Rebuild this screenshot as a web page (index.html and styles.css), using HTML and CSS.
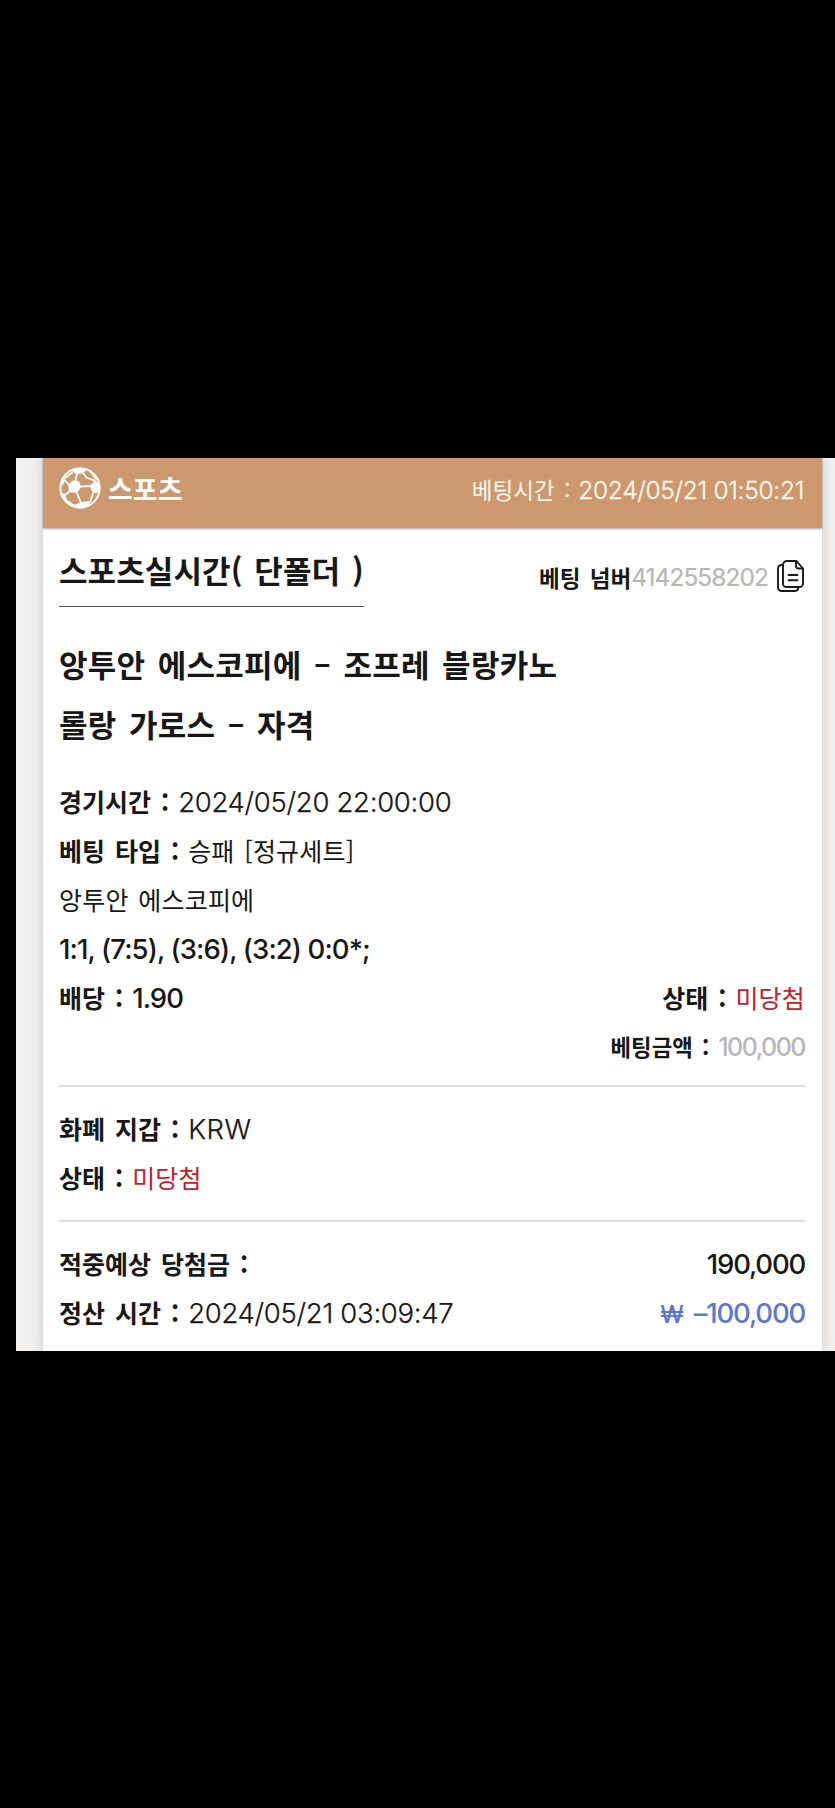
FILE: index.html
```html
<!DOCTYPE html>
<html lang="ko">
<head>
<meta charset="utf-8">
<title>베팅 내역</title>
<link rel="stylesheet" href="styles.css">
</head>
<body>
<main class="panel">
<article class="card">
<header class="card-head">
<div class="brand">
<svg class="ball" viewBox="0 0 42 42" aria-hidden="true">
<circle cx="21" cy="21" r="19.7" fill="none" stroke="#fff" stroke-width="1.900"/>
<path d="M9.500 17.500L14.500 13.700 19.700 14.700 22 19.700 17.700 25.500 10.300 24.700zM31 19L36 13.700 40.500 17.500 40 25 34.300 25.700zM13.500 3.500L20 1.500 27.500 2.500 24 6 16.500 6.500zM1.500 20L2.500 13 6 11 4.500 16.500zM15 38.500L22 35.500 31 34.500 29 39 21 41zM2.500 26L5.500 28 9 35.500 4.500 32zM30 3.500L36 7.500 40 14 36.500 12 33 7.500z" fill="#fff" stroke="#fff" stroke-width="0.800" stroke-linejoin="round"/>
<path d="M16.300 14L18.300 6M22 19.700L31 19M17.700 25.500L22 36M10.300 24.700L5 28.500M9.500 17.500L5 12.500M24 6L27.500 10.500 36 13.700M34.300 25.700L31 35M7.500 33.500L15 38.500M6 11L14 5" fill="none" stroke="#fff" stroke-width="1.800"/>
</svg>
<span class="brand-name">스포츠</span>
</div>
<div class="placed"><span class="ko">베팅시간 :</span><span class="date">2024/05/21 01:50:21</span></div>
</header>
<section class="bet-head">
<h1 class="kind">스포츠실시간( 단폴더 )</h1>
<div class="bet-no"><span class="ko">베팅 넘버</span><span class="id">4142558202</span>
<svg class="copy" viewBox="0 0 27 32" aria-hidden="true"><g fill="none" stroke="#1b1b1b" stroke-width="1.900" stroke-linejoin="round" stroke-linecap="round"><path d="M10 1h9.500l6.500 7.500v15a3.500 3.500 0 0 1-3.500 3.500H9.500A3.500 3.500 0 0 1 6 23.500V5a4 4 0 0 1 4-4z"/><path d="M19 1.500V6a2.500 2.500 0 0 0 2.500 2.500H26M6 5H4.500A3.500 3.500 0 0 0 1 8.500V27.500A3.500 3.500 0 0 0 4.500 31h13.500A3.500 3.500 0 0 0 21.300 27.500M11.500 15h9M11.500 20.300h9"/></g></svg></div>
</section>
<section class="match"><div>앙투안 에스코피에 – 조프레 블랑카노</div><div>롤랑 가로스 – 자격</div></section>
<section class="rows">
<div class="row"><div><span class="label">경기시간 :</span><span class="num">2024/05/20 22:00:00</span></div></div>
<div class="row"><div><span class="label">베팅 타입 :</span><span class="text">승패 [정규세트]</span></div></div>
<div class="row"><div><span class="text">앙투안 에스코피에</span></div></div>
<div class="row"><div><span class="strong">1:1, (7:5), (3:6), (3:2) 0:0*;</span></div></div>
<div class="row"><div><span class="label">배당 :</span><span class="strong">1.90</span></div><div><span class="label">상태 :</span><span class="text lost">미당첨</span></div></div>
<div class="row stake"><div><span class="label">베팅금액 :</span><span class="strong">100,000</span></div></div>
</section>
<section class="rows ruled">
<div class="row"><div><span class="label">화폐 지갑 :</span><span class="currency">KRW</span></div></div>
<div class="row"><div><span class="label">상태 :</span><span class="text lost">미당첨</span></div></div>
</section>
<section class="rows ruled last">
<div class="row"><div><span class="label">적중예상 당첨금 :</span></div><div><span class="strong total">190,000</span></div></div>
<div class="row"><div><span class="label">정산 시간 :</span><span class="num">2024/05/21 03:09:47</span></div><div><span class="strong net"><span class="won">₩</span> –100,000</span></div></div>
</section>
</article>
</main>
</body>
</html>
```

FILE: styles.css
```css
* { box-sizing: border-box; }
body { margin: 0; padding: 458px 0 0 16px; height: 1808px; background: #000; color: #171717; font-family: "Inter", "Noto Sans CJK KR", sans-serif; overflow: hidden; }
.panel { height: 893px; padding: 0 13px 0 27px; background: #f2f1ef; overflow: hidden; }
.card { height: 893px; background: #fefefe; box-shadow: 0 0 12px rgba(80, 65, 80, .25); white-space: nowrap; }
.card-head { display: flex; justify-content: space-between; height: 70px; padding: 9px 18px 0 16px; background: #cd986d; color: #fff; box-shadow: 0 1px 2px rgba(0, 0, 0, .35); }
.brand { display: flex; gap: 7px; height: 42px; line-height: 42px; }
.ball { width: 42px; height: 42px; }
.brand-name { font: 700 27px/44px "Noto Sans CJK KR", sans-serif; }
.placed { display: flex; gap: 8px; font-size: 24.5px; line-height: 47px; color: #fff8ef; }
.ko { font: 400 22.5px/45px "Noto Sans CJK KR", sans-serif; word-spacing: 3px; }
.date { font-weight: 300; letter-spacing: -.3px; -webkit-text-stroke: .3px currentColor; }
.bet-head { display: flex; justify-content: space-between; height: 79px; padding: 0 18px 0 16px; margin-bottom: 29px; }
.kind { margin: 0; height: 79px; border-bottom: 1px solid #555; font: 700 31px/83px "Noto Sans CJK KR", sans-serif; word-spacing: 3px; letter-spacing: .1px; }
.bet-no { display: flex; align-items: center; height: 98px; font-size: 24.5px; color: #b7b7b7; }
.bet-no .ko { font-weight: 700; color: #171717; }
.id { letter-spacing: -.95px; -webkit-text-stroke: .2px currentColor; }
.copy { width: 27px; height: 32px; margin: -2px 0 0 9px; }
.match { position: relative; top: -2px; height: 142px; padding-left: 16px; font: 700 31px/60px "Noto Sans CJK KR", sans-serif; word-spacing: 3.5px; letter-spacing: .25px; }
.rows { margin: 0 17px 0 16px; font-size: 27.5px; line-height: 49px; }
.row { display: flex; justify-content: space-between; height: 49px; }
.row > div { display: flex; }
.label { font: 700 25px/47px "Noto Sans CJK KR", sans-serif; word-spacing: 3px; margin-right: 9px; }
.text { font: 400 25px/47px "Noto Sans CJK KR", sans-serif; word-spacing: 2.5px; letter-spacing: .2px; }
.num, .currency { font-weight: 300; letter-spacing: -.3px; -webkit-text-stroke: .25px currentColor; }
.currency { letter-spacing: .5px; }
.strong { font-weight: 500; letter-spacing: -.9px; }
.lost { color: #c3202f; }
.stake { justify-content: flex-end; font-size: 25px; color: #b7b7b7; }
.stake .strong { letter-spacing: -1.5px; }
.stake .label { font-size: 22.3px; color: #171717; }
.ruled { border-top: 2px solid #ddd; margin-top: 13px; padding-top: 18px; }
.last { margin-top: 17px; }
.total, .net { letter-spacing: -1.2px; }
.net { color: #5b78ce; }
.won { margin-right: 5px; font-size: 24px; }
```
